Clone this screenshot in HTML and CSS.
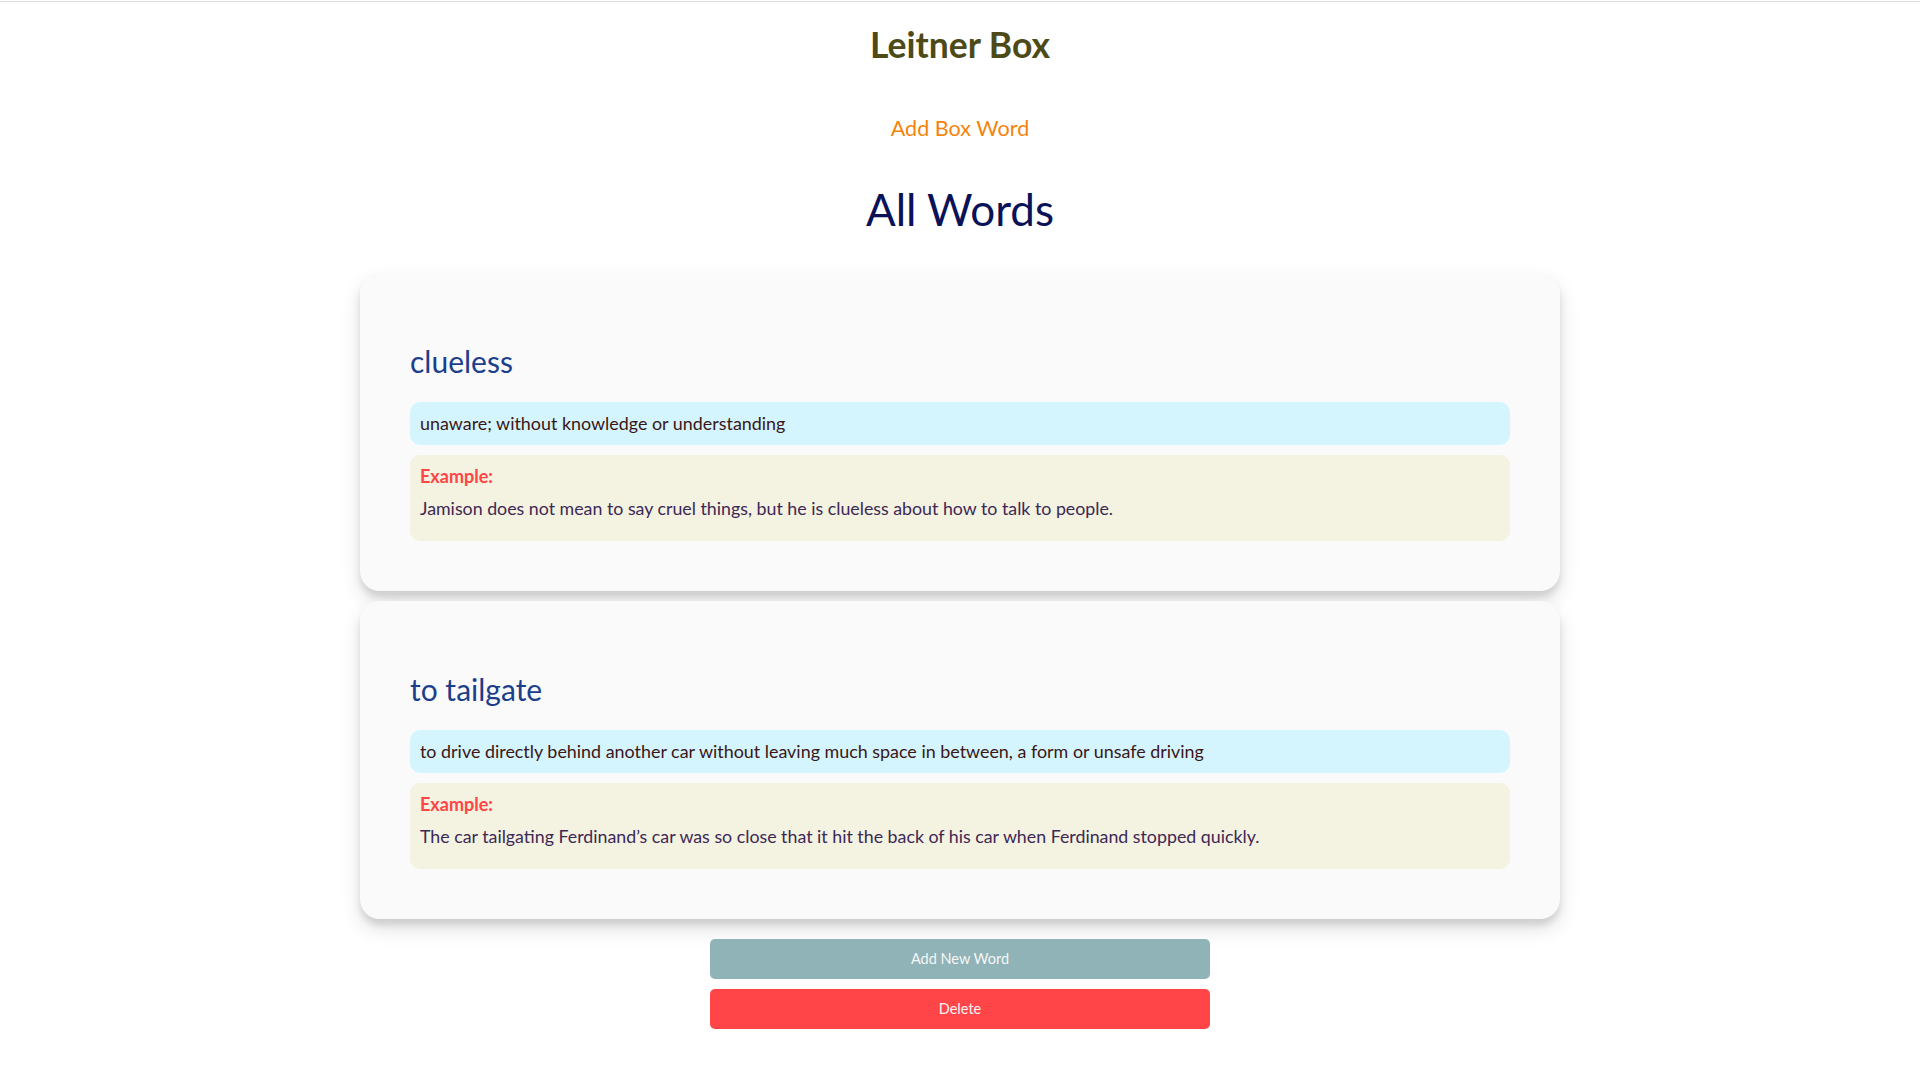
FILE: index.html
```html
<!DOCTYPE html>
<html lang="en">
<head>
<meta charset="utf-8">
<title>Leitner Box</title>
<link rel="stylesheet" href="styles.css">
</head>
<body>
<div class="topline"></div>
<header class="header">
  <h1 class="brand">Leitner Box</h1>
  <a class="box-link">Add Box Word</a>
  <h2 class="page-title">All Words</h2>
</header>
<main class="words">
  <section class="card">
    <h3 class="word">clueless</h3>
    <div class="definition">unaware; without knowledge or understanding</div>
    <div class="example">
      <div class="example-label">Example:</div>
      <p class="example-text">Jamison does not mean to say cruel things, but he is clueless about how to talk to people.</p>
    </div>
  </section>
  <section class="card">
    <h3 class="word">to tailgate</h3>
    <div class="definition">to drive directly behind another car without leaving much space in between, a form or unsafe driving</div>
    <div class="example">
      <div class="example-label">Example:</div>
      <p class="example-text">The car tailgating Ferdinand’s car was so close that it hit the back of his car when Ferdinand stopped quickly.</p>
    </div>
  </section>
</main>
<div class="actions">
  <button class="btn btn-add">Add New Word</button>
  <button class="btn btn-delete">Delete</button>
</div>
</body>
</html>
```
FILE: styles.css
```css
html, body {
  margin: 0;
  padding: 0;
  background: #ffffff;
}
body {
  font-family: Lato, "Noto Sans", sans-serif;
  line-height: 1.2;
}
.topline {
  margin-top: 1px;
  height: 1px;
  background: #dcdcdc;
}
.header {
  display: flex;
  flex-direction: column;
  align-items: center;
}
.brand {
  margin: 22px 0 0;
  font-size: 35.5px;
  font-weight: 700;
  color: #4d4a18;
  line-height: 42px;
}
.box-link {
  margin-top: 49px;
  font-size: 21.6px;
  color: #f5840c;
  line-height: 26px;
  cursor: pointer;
}
.page-title {
  margin: 41.5px 0 0;
  font-size: 44px;
  font-weight: 400;
  color: #0a1258;
  line-height: 52.8px;
}
.words {
  width: 1200px;
  margin: 38px auto 0;
  display: flex;
  flex-direction: column;
  gap: 10px;
}
.card {
  box-sizing: border-box;
  height: 318px;
  background: #fafafa;
  border-radius: 20px;
  padding: 50px;
  box-shadow: 0 10px 20px rgba(0,0,0,0.12), 0 6px 6px rgba(0,0,0,0.1);
}
.word {
  margin: 19.5px 0 0;
  font-size: 30px;
  font-weight: 400;
  color: #1b3f8c;
  line-height: 36px;
}
.definition {
  margin-top: 23px;
  background: #d4f5fe;
  border-radius: 10px;
  padding: 10px;
  height: 43px;
  box-sizing: border-box;
  font-size: 17.9px;
  line-height: 21.6px;
  color: #3b1616;
  display: flex;
  align-items: center;
}
.example {
  margin-top: 10px;
  background: #f4f2e0;
  border-radius: 10px;
  padding: 11px 10px 10px;
  height: 86px;
  box-sizing: border-box;
}
.example-label {
  font-size: 18px;
  font-weight: 700;
  color: #ff4545;
  line-height: 21.6px;
}
.example-text {
  margin: 11px 0 0;
  font-size: 17.8px;
  color: #3c2855;
  line-height: 21.6px;
}
.actions {
  width: 500px;
  margin: 20px auto 0;
  display: flex;
  flex-direction: column;
  gap: 10px;
}
.btn {
  height: 40px;
  border: none;
  border-radius: 5px;
  padding: 0 0 2px;
  font-family: Lato, "Noto Sans", sans-serif;
  font-size: 14.5px;
  color: #f6f6f6;
  cursor: pointer;
}
.btn-add {
  background: #8fb3b6;
}
.btn-delete {
  background: #ff4547;
}
```
